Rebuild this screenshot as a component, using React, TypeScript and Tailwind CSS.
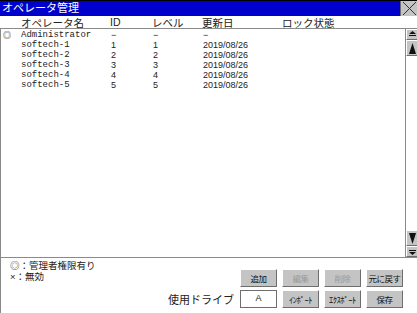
import React from 'react';

const jp = "font-['Noto_Sans_CJK_JP','Liberation_Sans',sans-serif]";
const mono = "font-['Liberation_Mono','DejaVu_Sans_Mono',monospace]";
const sans = "font-['Liberation_Sans','Noto_Sans_CJK_JP',sans-serif]";

const rows = [
  { mark: '◎', name: 'Administrator', id: '−', level: '−', date: '−' },
  { mark: '', name: 'softech-1', id: '1', level: '1', date: '2019/08/26' },
  { mark: '', name: 'softech-2', id: '2', level: '2', date: '2019/08/26' },
  { mark: '', name: 'softech-3', id: '3', level: '3', date: '2019/08/26' },
  { mark: '', name: 'softech-4', id: '4', level: '4', date: '2019/08/26' },
  { mark: '', name: 'softech-5', id: '5', level: '5', date: '2019/08/26' },
];

const cols = 'grid grid-cols-[20px_90px_42px_50px_80px_1fr]';

function Btn({ label, disabled }: { label: string; disabled?: boolean }) {
  return (
    <div
      className={`w-[37px] h-[18px] flex items-center justify-center bg-[#c4c4c4] border border-t-white border-l-white border-r-[#6e6e6e] border-b-[#6e6e6e] text-[8.5px] leading-none whitespace-nowrap tracking-[-0.5px] ${jp} ${disabled ? 'text-[#9a9a9a]' : 'text-[#111]'}`}
    >
      {label}
    </div>
  );
}

function ScrollBtn({ h, children }: { h: string; children: React.ReactNode }) {
  return (
    <div className={`${h} w-[12px] flex items-center justify-center bg-[#c4c4c4] border border-t-white border-l-white border-r-[#6e6e6e] border-b-[#6e6e6e]`}>
      {children}
    </div>
  );
}

export default function App() {
  return (
    <div className="w-[417px] h-[313px] bg-white flex flex-col overflow-hidden text-[#222]">
      {/* title bar */}
      <div className="h-[16px] flex bg-[#0000cc] border-t border-black">
        <div className={`flex-1 text-white text-[11px] leading-[13px] pl-[2px] ${jp}`}>
          オペレータ管理
        </div>
        <div className="w-[17px] h-[15px] bg-[#c4c4c4] border-l border-[#6e6e6e] flex items-center justify-center">
          <svg width="15" height="13" viewBox="0 0 15 13">
            <path d="M1 0 L14 13 M14 0 L1 13" stroke="#333" strokeWidth="1" />
          </svg>
        </div>
      </div>

      {/* header */}
      <div className={`${cols} h-[12px] text-[10.5px] leading-[13px] pr-[12px] ${jp}`}>
        <div />
        <div className="pl-[1px]">オペレータ名</div>
        <div className={sans}>ID</div>
        <div>レベル</div>
        <div>更新日</div>
        <div>ロック状態</div>
      </div>

      {/* list */}
      <div className="h-[229px] flex border-t border-[#8a8a8a]">
        <div className="flex-1 border-l border-[#8a8a8a] pt-[1px]">
          {rows.map((r) => (
            <div key={r.name} className={`${cols} h-[10px] text-[9px] leading-[10px]`}>
              <div className={`pl-[2px] text-[8px] ${jp}`}>{r.mark}</div>
              <div className={mono}>{r.name}</div>
              <div className={sans}>{r.id}</div>
              <div className={sans}>{r.level}</div>
              <div className={sans}>{r.date}</div>
              <div />
            </div>
          ))}
        </div>
        <div className="w-[12px] flex flex-col border-l border-[#8a8a8a] bg-white">
          <ScrollBtn h="h-[11px]">
            <svg width="7" height="7" viewBox="0 0 7 7">
              <path d="M3.5 0 L7 3 L0 3 Z M0 4 H7 V5 H0 Z" fill="#111" />
            </svg>
          </ScrollBtn>
          <ScrollBtn h="h-[16px]">
            <svg width="7" height="11" viewBox="0 0 7 11">
              <path d="M3.5 0 L7 11 L0 11 Z" fill="#111" />
            </svg>
          </ScrollBtn>
          <div className="flex-1" />
          <ScrollBtn h="h-[16px]">
            <svg width="7" height="11" viewBox="0 0 7 11">
              <path d="M0 0 L7 0 L3.5 11 Z" fill="#111" />
            </svg>
          </ScrollBtn>
          <ScrollBtn h="h-[11px]">
            <svg width="7" height="7" viewBox="0 0 7 7">
              <path d="M0 2 H7 V3 H0 Z M0 4 L7 4 L3.5 7 Z" fill="#111" />
            </svg>
          </ScrollBtn>
        </div>
      </div>

      {/* footer */}
      <div className={`flex-1 flex border-t border-[#8a8a8a]`}>
        <div className={`border-l border-[#8a8a8a] pl-[9px] pt-[2px] text-[9.5px] leading-[11px] w-[160px] ${sans}`}>
          <div>◎：管理者権限有り</div>
          <div>×：無効</div>
        </div>
        <div className="flex-1 flex items-end pb-[5px] pl-[8px] gap-[5px]">
          <div className={`h-[18px] flex items-center text-[11px] mr-[1px] whitespace-nowrap ${jp}`}>使用ドライブ</div>
          <div className="flex flex-col gap-[3px]">
            <Btn label="追加" />
            <div className={`w-[37px] h-[18px] bg-white border border-[#6e6e6e] flex items-center justify-center text-[9px] ${sans}`}>
              A
            </div>
          </div>
          <div className="flex flex-col gap-[3px]">
            <Btn label="編集" disabled />
            <Btn label="ｲﾝﾎﾟｰﾄ" />
          </div>
          <div className="flex flex-col gap-[3px]">
            <Btn label="削除" disabled />
            <Btn label="ｴｸｽﾎﾟｰﾄ" />
          </div>
          <div className="flex flex-col gap-[3px]">
            <Btn label="元に戻す" />
            <Btn label="保存" />
          </div>
        </div>
      </div>
    </div>
  );
}
